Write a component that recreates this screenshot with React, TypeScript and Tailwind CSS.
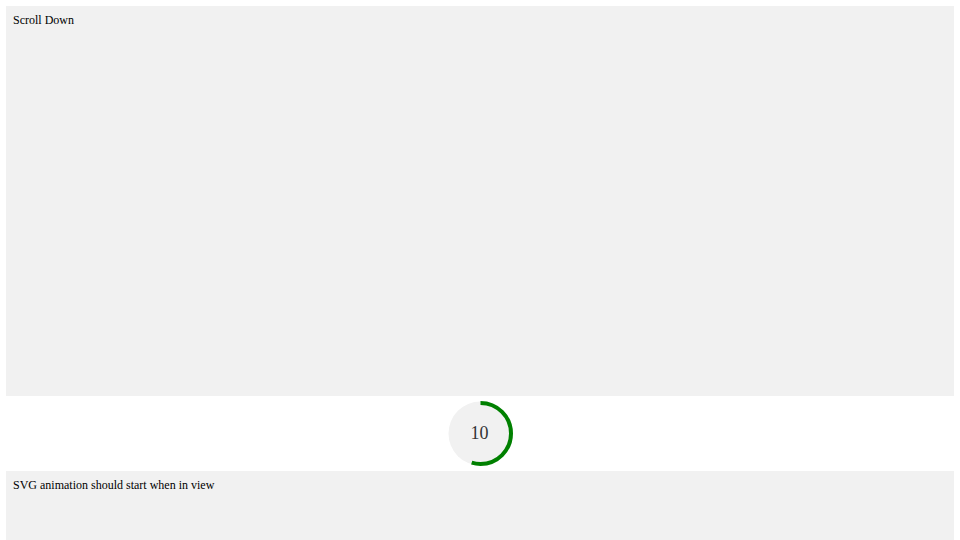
export default function App() {
  const r = 30.5;
  const c = 2 * Math.PI * r;
  const progress = 0.546;
  return (
    <div className="p-[6px] bg-white w-[960px] h-[540px] overflow-hidden" style={{ fontFamily: '"Liberation Serif", "Times New Roman", serif' }}>
      <div className="h-[390px] bg-[#f1f1f1] px-[7px] pt-[5px] text-[12px] text-black">Scroll Down</div>
      <div className="h-[75px] flex items-center justify-center">
        <div className="relative w-[65px] h-[65px]">
          <svg width="65" height="65" viewBox="0 0 65 65" className="block">
            <circle cx="32.5" cy="32.5" r="32" fill="#f1f1f1" />
            <circle
              cx="32.5"
              cy="32.5"
              r={r}
              fill="none"
              stroke="#008000"
              strokeWidth="4"
              strokeDasharray={`${c * progress} ${c}`}
              transform="rotate(-90 32.5 32.5)"
            />
          </svg>
          <div className="absolute inset-0 flex items-center justify-center pr-[1px] text-[18px] text-[#333]">10</div>
        </div>
      </div>
      <div className="h-[100px] bg-[#f1f1f1] px-[7px] pt-[5px] text-[12px] text-black">SVG animation should start when in view</div>
    </div>
  );
}
